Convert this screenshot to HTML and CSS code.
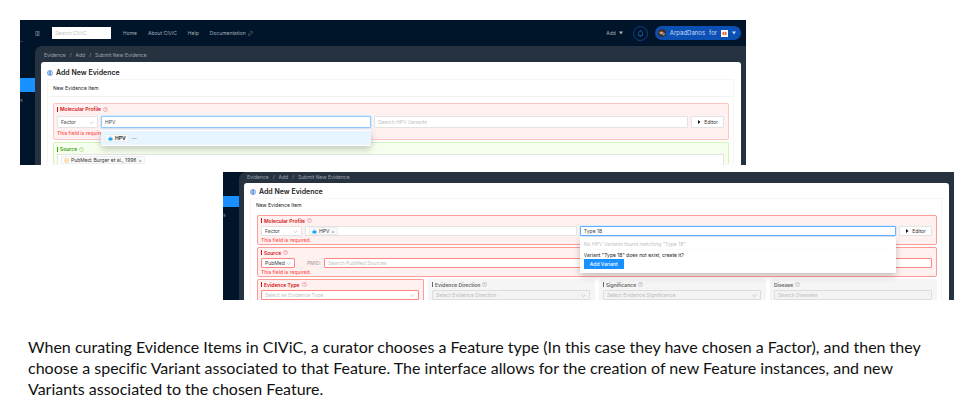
FILE: index.html
```html
<!DOCTYPE html>
<html lang="en">
<head>
<meta charset="utf-8">
<meta name="viewport" content="width=device-width, initial-scale=1">
<title>Add New Evidence</title>
<link rel="stylesheet" href="styles.css">
</head>
<body>
<svg class="defs" aria-hidden="true">
  <symbol id="help" viewBox="0 0 12 12"><circle cx="6" cy="6" r="5" fill="none" stroke="currentColor"/><path d="M4.3 4.8a1.7 1.7 0 1 1 2.4 1.5Q6 6.7 6 7.4M6 8.5v1" fill="none" stroke="currentColor"/></symbol>
  <symbol id="chevron" viewBox="0 0 12 12"><path d="M1.5 3.5 6 9l4.500-5.500" fill="none" stroke="currentColor" stroke-width="1.300"/></symbol>
  <symbol id="factor" viewBox="0 0 12 12"><path d="M3 1h6l1 4H2z" fill="#91d5ff"/><path d="M1 5h10v3q0 3-3 3H4q-3 0-3-3z" fill="#1ba8f5"/></symbol>
  <symbol id="evidence" viewBox="0 0 14 14"><circle cx="7" cy="7" r="6" fill="#dcecff" stroke="#4b87d8" stroke-width="1.500"/><path d="M5 3v8M8 3v8M5 3h4M5 7h4M5 11h4" fill="none" stroke="#2f6fca" stroke-width="1.300"/></symbol>
  <symbol id="play" viewBox="0 0 8 8"><path d="M2 0l5 4-5 4z" fill="currentColor"/></symbol>
  <symbol id="down" viewBox="0 0 8 8"><path d="M0 1h8L4 7z" fill="currentColor"/></symbol>
</svg>
<main class="slide">
  <section class="shot shot-feature">
    <aside class="rail"><span class="rail-top">–</span><span class="rail-active"></span><span class="rail-text">s</span></aside>
    <div class="app">
      <header class="nav">
        <button class="plain" aria-label="Menu"><svg class="icon" viewBox="0 0 12 12"><path d="M1 1.500h10M4 4.500h7M4 7.500h7M1 10.500h10M1 4v4" fill="none" stroke="#aab2bb" stroke-width="1.400"/></svg></button>
        <input class="nav-search" aria-label="Search CIViC" placeholder="Search CIViC">
        <nav class="links"><a href="#">Home</a><a href="#">About CIViC</a><a href="#">Help</a><a href="#">Documentation <svg class="icon" viewBox="0 0 12 12"><path d="M5 3l2-2q2-1 4 1t0 3L9 7M7 9l-2 2q-2 1-4-1t0-3l2-2M4 8l4-4" fill="none" stroke="currentColor"/></svg></a></nav>
        <button class="plain add">Add <svg class="caret"><use href="#down"/></svg></button>
        <button class="bell" aria-label="Notifications"><svg viewBox="0 0 12 12"><path d="M1.500 9.500h9M2.800 9V5a3.200 3.200 0 0 1 6.400 0v4M6 .3v1.500M5 11h2" fill="none" stroke="currentColor" stroke-width="1.200"/></svg></button>
        <button class="user"><svg class="avatar" viewBox="0 0 16 16"><circle cx="8" cy="8" r="8" fill="#3c3030"/><circle cx="7" cy="7" r="4" fill="#c99a7c"/><path d="M3 6q2-5 8-3l1 3q-5-2-9 0z" fill="#4a241b"/><path d="M9 10l5-2-2 6z" fill="#7eabc9"/></svg><span>ArpadDanos</span><span>for</span><svg class="org" viewBox="0 0 12 12"><path d="M0 0h12v12H0z" fill="#fff"/><path d="M2 3h8v6H2z" fill="#f4b8a8"/><path d="M3 4h2v4H3zM7 4h2v4H7z" fill="#d9532f"/></svg><svg class="caret"><use href="#down"/></svg></button>
      </header>
      <div class="content">
        <div class="crumbs"><a href="#">Evidence</a><span>/</span><a href="#">Add</a><span>/</span><span>Submit New Evidence</span></div>
        <div class="card">
          <h1><svg><use href="#evidence"/></svg>Add New Evidence</h1>
          <div class="panel">
            <h2>New Evidence Item</h2>
            <form class="form">
              <div class="group error">
                <label class="label" for="feature1">Molecular Profile <svg><use href="#help"/></svg></label>
                <div class="row">
                  <span class="select kind"><select aria-label="Feature type"><option>Factor</option></select><svg><use href="#chevron"/></svg></span>
                  <div class="feature">
                    <input class="field focus" id="feature1" value="HPV">
                    <div class="menu"><div class="option"><span class="chip"><svg><use href="#factor"/></svg><b>HPV</b></span><span class="dash">—</span></div></div>
                  </div>
                  <div class="variant"><input class="field" aria-label="Variant" placeholder="Search HPV Variants"></div>
                  <button class="field editor" type="button"><svg><use href="#play"/></svg>Editor</button>
                </div>
                <p class="message">This field is required.</p>
              </div>
              <div class="group valid">
                <span class="label">Source <svg><use href="#help"/></svg></span>
                <div class="field tags cut"><span class="chip"><svg viewBox="0 0 12 12"><circle cx="6" cy="6" r="5" fill="#fff1d6" stroke="#f6b04a"/><path d="M4 4h4v4H4z" fill="#ffd28a"/></svg>PubMed: Burger et al., 1996 <button class="remove" type="button" aria-label="Remove source">×</button></span></div>
              </div>
            </form>
          </div>
        </div>
      </div>
    </div>
  </section>

  <section class="shot shot-variant">
    <aside class="rail"><span class="rail-active"></span><span class="rail-text">s</span></aside>
    <div class="app">
      <div class="content">
        <div class="crumbs"><a href="#">Evidence</a><span>/</span><a href="#">Add</a><span>/</span><span>Submit New Evidence</span></div>
        <div class="card">
          <h1><svg><use href="#evidence"/></svg>Add New Evidence</h1>
          <div class="panel">
            <h2>New Evidence Item</h2>
            <form class="form">
              <div class="group error">
                <label class="label" for="variant2">Molecular Profile <svg><use href="#help"/></svg></label>
                <div class="row">
                  <span class="select kind"><select aria-label="Feature type"><option>Factor</option></select><svg><use href="#chevron"/></svg></span>
                  <div class="feature"><div class="field tags"><span class="chip"><svg><use href="#factor"/></svg>HPV <button class="remove" type="button" aria-label="Remove HPV">×</button></span></div></div>
                  <div class="variant">
                    <input class="field focus" id="variant2" value="Type 18">
                    <div class="menu"><p class="none">No HPV Variants found matching "Type 18"</p><p class="create">Variant "Type 18" does not exist, create it?</p><button class="primary" type="button">Add Variant</button></div>
                  </div>
                  <button class="field editor" type="button"><svg><use href="#play"/></svg>Editor</button>
                </div>
                <p class="message">This field is required.</p>
              </div>
              <div class="group error">
                <label class="label" for="source2">Source <svg><use href="#help"/></svg></label>
                <div class="row">
                  <span class="select database"><select aria-label="Source type"><option>PubMed</option></select><svg><use href="#chevron"/></svg></span>
                  <span class="prefix">PMID:</span>
                  <input class="field grow" id="source2" placeholder="Search PubMed Sources">
                </div>
                <p class="message">This field is required.</p>
              </div>
              <div class="columns">
                <div class="group error"><label class="label" for="type">Evidence Type <svg><use href="#help"/></svg></label><span class="select"><select id="type"><option>Select an Evidence Type</option></select><svg><use href="#chevron"/></svg></span></div>
                <div class="group off"><label class="label" for="direction">Evidence Direction <svg><use href="#help"/></svg></label><span class="select"><select id="direction" disabled><option>Select Evidence Direction</option></select><svg><use href="#chevron"/></svg></span></div>
                <div class="group off"><label class="label" for="significance">Significance <svg><use href="#help"/></svg></label><span class="select"><select id="significance" disabled><option>Select Evidence Significance</option></select><svg><use href="#chevron"/></svg></span></div>
                <div class="group off optional"><label class="label" for="disease">Disease <svg><use href="#help"/></svg></label><input class="field" id="disease" placeholder="Search Diseases" disabled></div>
              </div>
            </form>
          </div>
        </div>
      </div>
    </div>
  </section>

  <p class="caption">When curating Evidence Items in CIViC, a curator chooses a Feature type (In this case they have chosen a Factor), and then they<br>choose a specific Variant associated to that Feature. The interface allows for the creation of new Feature instances, and new<br>Variants associated to the chosen Feature.</p>
</main>
</body>
</html>
```
FILE: styles.css
```css
* { box-sizing: border-box; }
body { margin: 0; background: #fff; color: #222; font-family: Inter, "Liberation Sans", sans-serif; font-size: 5px; line-height: 8px; }
h1, h2, p { margin: 0; }
a { color: inherit; text-decoration: none; }
button, input, select { font: inherit; color: inherit; margin: 0; }
button { padding: 0; }
svg { display: block; flex: none; width: 5px; height: 5px; }
.defs { position: absolute; width: 0; height: 0; }

.slide { padding: 20px 23px 14px 20px; }
.shot { display: flex; overflow: hidden; background: #001529; }
.shot-feature { margin-right: 208px; }
.shot-variant { margin: 7px 0 0 203px; }
.rail { flex: none; width: 15px; display: flex; flex-direction: column; color: #8792a0; overflow: hidden; }
.rail-top { height: 58px; padding-top: 17px; }
.rail-active { height: 14px; background: #1890ff; }
.rail-text { padding-top: 4px; }
.app { flex: 1; min-width: 0; }

.nav { display: flex; align-items: center; height: 26px; padding: 0 5px 0 0; color: #a5adb7; }
.plain { border: 0; background: none; display: flex; align-items: center; gap: 3px; }
.nav-search { width: 59px; height: 12px; margin-left: 12px; padding: 0 3px; border: 0; background: #fff; color: #333; }
.links { display: flex; gap: 11px; margin-left: 12px; flex: 1; }
.links a { display: flex; align-items: center; gap: 2px; }
.caret { width: 4px; height: 4px; }
.bell { width: 15px; height: 15px; margin: 0 7px 0 10px; border: 1px solid #0b438c; border-radius: 50%; background: none; color: #1668c7; display: grid; place-items: center; }
.bell svg { width: 7px; height: 7px; }
.user { display: flex; align-items: center; gap: 4px; height: 14px; padding: 0 5px 0 3px; border: 0; border-radius: 7px; background: #0b50b5; color: #c6daf5; font-size: 6px; }
.avatar { width: 8px; height: 8px; }
.org { width: 7px; height: 7px; }

.content { padding: 0 5px 0 6px; background: #273240; border-top-left-radius: 7px; }
.crumbs { display: flex; gap: 4px; height: 16px; padding: 5px 3px 0; color: #9ba3ad; }
.card { padding: 5px 7px 0 6px; background: #fff; border-radius: 3px 3px 0 0; }
h1 { display: flex; align-items: center; gap: 3px; height: 12px; font-size: 7px; line-height: 12px; font-weight: 600; }
h1 svg { width: 6px; height: 6px; }
.panel { border: 1px solid #f5f5f5; border-width: 1px 1px 0; }
h2 { height: 17px; padding-left: 5px; border-bottom: 1px solid #f3f3f3; font-size: 5px; line-height: 16px; font-weight: 400; }
.form { display: flex; flex-direction: column; gap: 2px; padding: 6px 4px 0 5px; }

.group { border: 1px solid #ffc4c0; border-radius: 2px; padding: 0 4px 1px 3px; background: #fff1f0; }
.label { display: flex; align-items: center; gap: 2px; height: 10px; margin-bottom: 2px; font-weight: 600; color: #cf1322; }
.label::before { content: ""; width: 1px; height: 5px; background: currentColor; }
.label svg { opacity: .6; }
.valid { background: #f6ffed; border-color: #d4f2bd; border-bottom: 0; padding-top: 1px; padding-bottom: 0; }
.valid .label { color: #389e0d; margin-bottom: 0; }
.row { display: flex; gap: 3px; }
.field, .select select { display: block; width: 100%; height: 12px; padding: 0 3px; border: 1px solid #e3e3e3; border-radius: 1px; background: #fff; color: #444; outline: 0; }
::placeholder { color: #bfbfbf; opacity: 1; }
.select { display: block; position: relative; }
.select select { appearance: none; }
.select svg { position: absolute; right: 4px; top: 50%; margin-top: -2px; color: #b5b5b5; pointer-events: none; }
.kind { flex: none; width: 41px; }
.feature { flex: 270 1 0; position: relative; min-width: 0; }
.variant { flex: 314 1 0; position: relative; min-width: 0; }
.field.focus { border-color: #91caff; box-shadow: 0 0 0 1px #d6ebff; }
.field.editor { flex: none; width: 33px; display: flex; align-items: center; justify-content: center; gap: 3px; color: #333; }
.editor svg { width: 4px; height: 4px; color: #111; }
.message { height: 10px; line-height: 10px; color: #ff4d4f; font-weight: 500; }
.menu { position: absolute; z-index: 2; left: 0; right: 0; top: 100%; margin-top: 2px; background: #fff; box-shadow: 0 3px 7px rgba(0, 0, 0, .22); }
.option { display: flex; align-items: center; gap: 3px; height: 14px; margin: 1px 0; padding: 0 4px; background: #e6f5ff; }
.chip { display: flex; align-items: center; gap: 2px; height: 8px; padding: 0 2px; border: 1px solid #eee; border-radius: 1px; background: #fafafa; color: #333; white-space: nowrap; }
.dash { color: #888; }
.field.tags { display: flex; align-items: center; }
.remove { border: 0; background: none; color: #888; }
.cut { height: 11px; border-bottom: 0; border-radius: 1px 1px 0 0; }

.shot-variant .rail { width: 16px; }
.shot-variant .rail-active { height: 11px; margin-top: 24px; }
.shot-variant .content { padding-left: 5px; }
.shot-variant .crumbs { height: 11px; padding-top: 1px; }
.shot-variant .card { padding-top: 3px; }
.shot-variant h2 { height: 12px; line-height: 12px; border: 0; }
.shot-variant .form { gap: 2px; padding-top: 4px; padding-left: 6px; }
.shot-variant .group { border-color: #ff9c9a; padding-bottom: 0; }
.shot-variant .label { height: 9px; margin-bottom: 1px; }
.shot-variant .field, .shot-variant select { height: 10px; }
.shot-variant .message { height: 8px; line-height: 8px; }
.shot-variant .variant .field { border-color: #69b1ff; }
.database { flex: none; width: 34px; }
.prefix { width: 23px; text-align: right; line-height: 10px; color: #999; }
.row .grow { flex: 1; }
.shot-variant #source2, .shot-variant .database select, .shot-variant #type { border-color: #ff8583; }
.shot-variant .menu { padding: 2px 4px 4px; margin-top: 1px; }
.none { color: #bfbfbf; height: 11px; line-height: 10px; border-bottom: 1px solid #fafafa; }
.create { height: 9px; line-height: 10px; color: #222; }
.primary { display: block; height: 10px; padding: 0 6px; border: 0; background: #1890ff; color: #fff; font-weight: 500; line-height: 10px; }
.columns { display: grid; grid-template-columns: repeat(4, 1fr); gap: 4px; }
.columns .group { border-bottom: 0; border-radius: 2px 2px 0 0; }
.shot-variant .off { background: #f5f5f5; border-color: #f5f5f5; }
.off .label { color: #666; }
.optional .label::before { display: none; }
.off .field, .off select { background: #f3f3f3; border-color: #ddd; color: #bbb; opacity: 1; }
#type { color: #bfbfbf; }

.caption { margin: 36px 0 0 8px; font-family: Lato, sans-serif; font-size: 16px; line-height: 21px; font-variant-ligatures: none; color: #111; white-space: nowrap; }
```
